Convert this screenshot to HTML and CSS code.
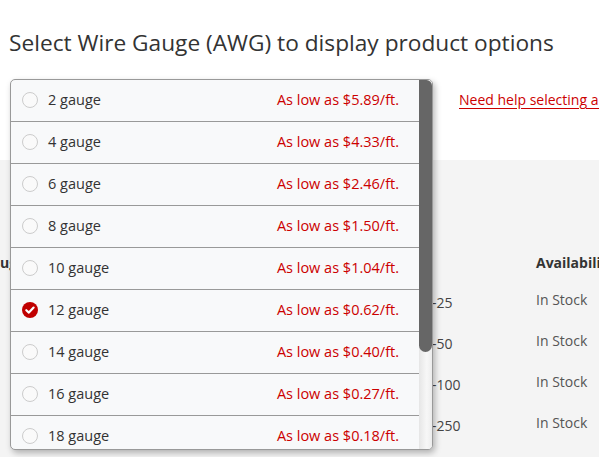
FILE: index.html
```html
<!DOCTYPE html>
<html>
<head>
<meta charset="utf-8">
<link rel="stylesheet" href="styles.css">
</head>
<body>
<div class="page">
  <section class="top">
    <h1 class="title">Select Wire Gauge (AWG) to display product options</h1>
    <div class="select-row">
      <div class="select-closed"></div>
      <a class="help-link" href="#">Need help selecting a gauge?</a>
    </div>
  </section>
  <section class="results">
    <div class="thead">
      <div class="th c-gauge">uge</div>
      <div class="th c-qty"></div>
      <div class="th c-avail">Availability</div>
    </div>
    <div class="tbody">
      <div class="tr"><div class="td c-gauge"></div><div class="td c-qty">1-25</div><div class="td c-avail">In Stock</div></div>
      <div class="tr"><div class="td c-gauge"></div><div class="td c-qty">1-50</div><div class="td c-avail">In Stock</div></div>
      <div class="tr"><div class="td c-gauge"></div><div class="td c-qty">1-100</div><div class="td c-avail">In Stock</div></div>
      <div class="tr"><div class="td c-gauge"></div><div class="td c-qty">1-250</div><div class="td c-avail">In Stock</div></div>
    </div>
  </section>

  <div class="dropdown">
    <ul class="options">
      <li class="opt"><span class="radio"></span><span class="label">2 gauge</span><span class="price">As low as $5.89/ft.</span></li>
      <li class="opt"><span class="radio"></span><span class="label">4 gauge</span><span class="price">As low as $4.33/ft.</span></li>
      <li class="opt"><span class="radio"></span><span class="label">6 gauge</span><span class="price">As low as $2.46/ft.</span></li>
      <li class="opt"><span class="radio"></span><span class="label">8 gauge</span><span class="price">As low as $1.50/ft.</span></li>
      <li class="opt"><span class="radio"></span><span class="label">10 gauge</span><span class="price">As low as $1.04/ft.</span></li>
      <li class="opt selected"><span class="radio checked"><svg viewBox="0 0 16 16" width="16" height="16"><circle cx="8" cy="8" r="8" fill="#c00000"/><path d="M4.3 8.2 L6.9 10.6 L11.6 5.6" fill="none" stroke="#fff" stroke-width="2.2" stroke-linecap="round" stroke-linejoin="round"/></svg></span><span class="label">12 gauge</span><span class="price">As low as $0.62/ft.</span></li>
      <li class="opt"><span class="radio"></span><span class="label">14 gauge</span><span class="price">As low as $0.40/ft.</span></li>
      <li class="opt"><span class="radio"></span><span class="label">16 gauge</span><span class="price">As low as $0.27/ft.</span></li>
      <li class="opt"><span class="radio"></span><span class="label">18 gauge</span><span class="price">As low as $0.18/ft.</span></li>
      <li class="opt"><span class="radio"></span><span class="label">20 gauge</span><span class="price">As low as $0.12/ft.</span></li>
    </ul>
    <div class="scrollbar"><div class="thumb"></div></div>
  </div>
</div>
</body>
</html>
```

FILE: styles.css
```css
* { box-sizing: border-box; }
html, body {
  margin: 0;
  padding: 0;
  width: 599px;
  height: 457px;
  overflow: hidden;
  font-family: "Open Sans", "Liberation Sans", sans-serif;
  color: #333;
  background: #f4f4f4;
}
.page {
  position: relative;
  width: 599px;
  height: 457px;
  overflow: hidden;
}
.top {
  background: #fff;
  height: 160px;
  padding: 28px 0 0 9px;
}
.title {
  margin: 0;
  font-size: 22.7px;
  font-weight: 400;
  line-height: 30px;
  color: #333;
  white-space: nowrap;
}
.select-row {
  display: flex;
  align-items: center;
  margin-top: 21px;
  white-space: nowrap;
}
.select-closed {
  width: 424px;
  height: 40px;
  flex: none;
}
.help-link {
  margin-left: 26px;
  font-size: 14px;
  color: #cc0000;
  text-decoration: underline;
  text-underline-offset: 3px;
}
.results {
  height: 297px;
  padding-top: 93px;
  font-size: 14px;
  white-space: nowrap;
}
.thead, .tr {
  display: grid;
  grid-template-columns: 433px 103px 1fr;
}
.thead {
  height: 20px;
  line-height: 20px;
  margin-bottom: 17px;
}
.tr {
  height: 41px;
  line-height: 20px;
}
.th {
  font-weight: 700;
  color: #333;
}
.td {
  color: #555;
}
.td.c-qty {
  color: #444;
  padding-top: 3px;
  margin-left: -9px;
}

.dropdown {
  position: absolute;
  left: 10px;
  top: 79px;
  width: 423px;
  height: 371px;
  display: flex;
  border: 1px solid #999;
  border-radius: 5px;
  background: #f8f9fa;
  box-shadow: 2px 3px 6px rgba(0,0,0,0.28);
  overflow: hidden;
}
.options {
  list-style: none;
  margin: 0;
  padding: 0;
  flex: 1;
  overflow: hidden;
}
.opt {
  display: flex;
  align-items: center;
  height: 42px;
  border-bottom: 1px solid #999;
  padding: 0 20px 1px 11px;
  font-size: 14.5px;
  line-height: 20px;
}
.radio {
  width: 16px;
  height: 16px;
  border: 1px solid #ccc;
  border-radius: 50%;
  background: #fafafa;
  flex: none;
  margin-right: 10px;
}
.radio.checked {
  border: none;
  background: none;
}
.radio svg { display: block; }
.label {
  flex: 1;
  color: #333;
}
.price {
  color: #cc0000;
}
.scrollbar {
  width: 13px;
  flex: none;
  background: linear-gradient(to right, #e6e6e6, #f7f7f7 60%, #ececec);
}
.thumb {
  height: 272px;
  background: #666;
  border-radius: 0 6px 7px 7px;
}
```
